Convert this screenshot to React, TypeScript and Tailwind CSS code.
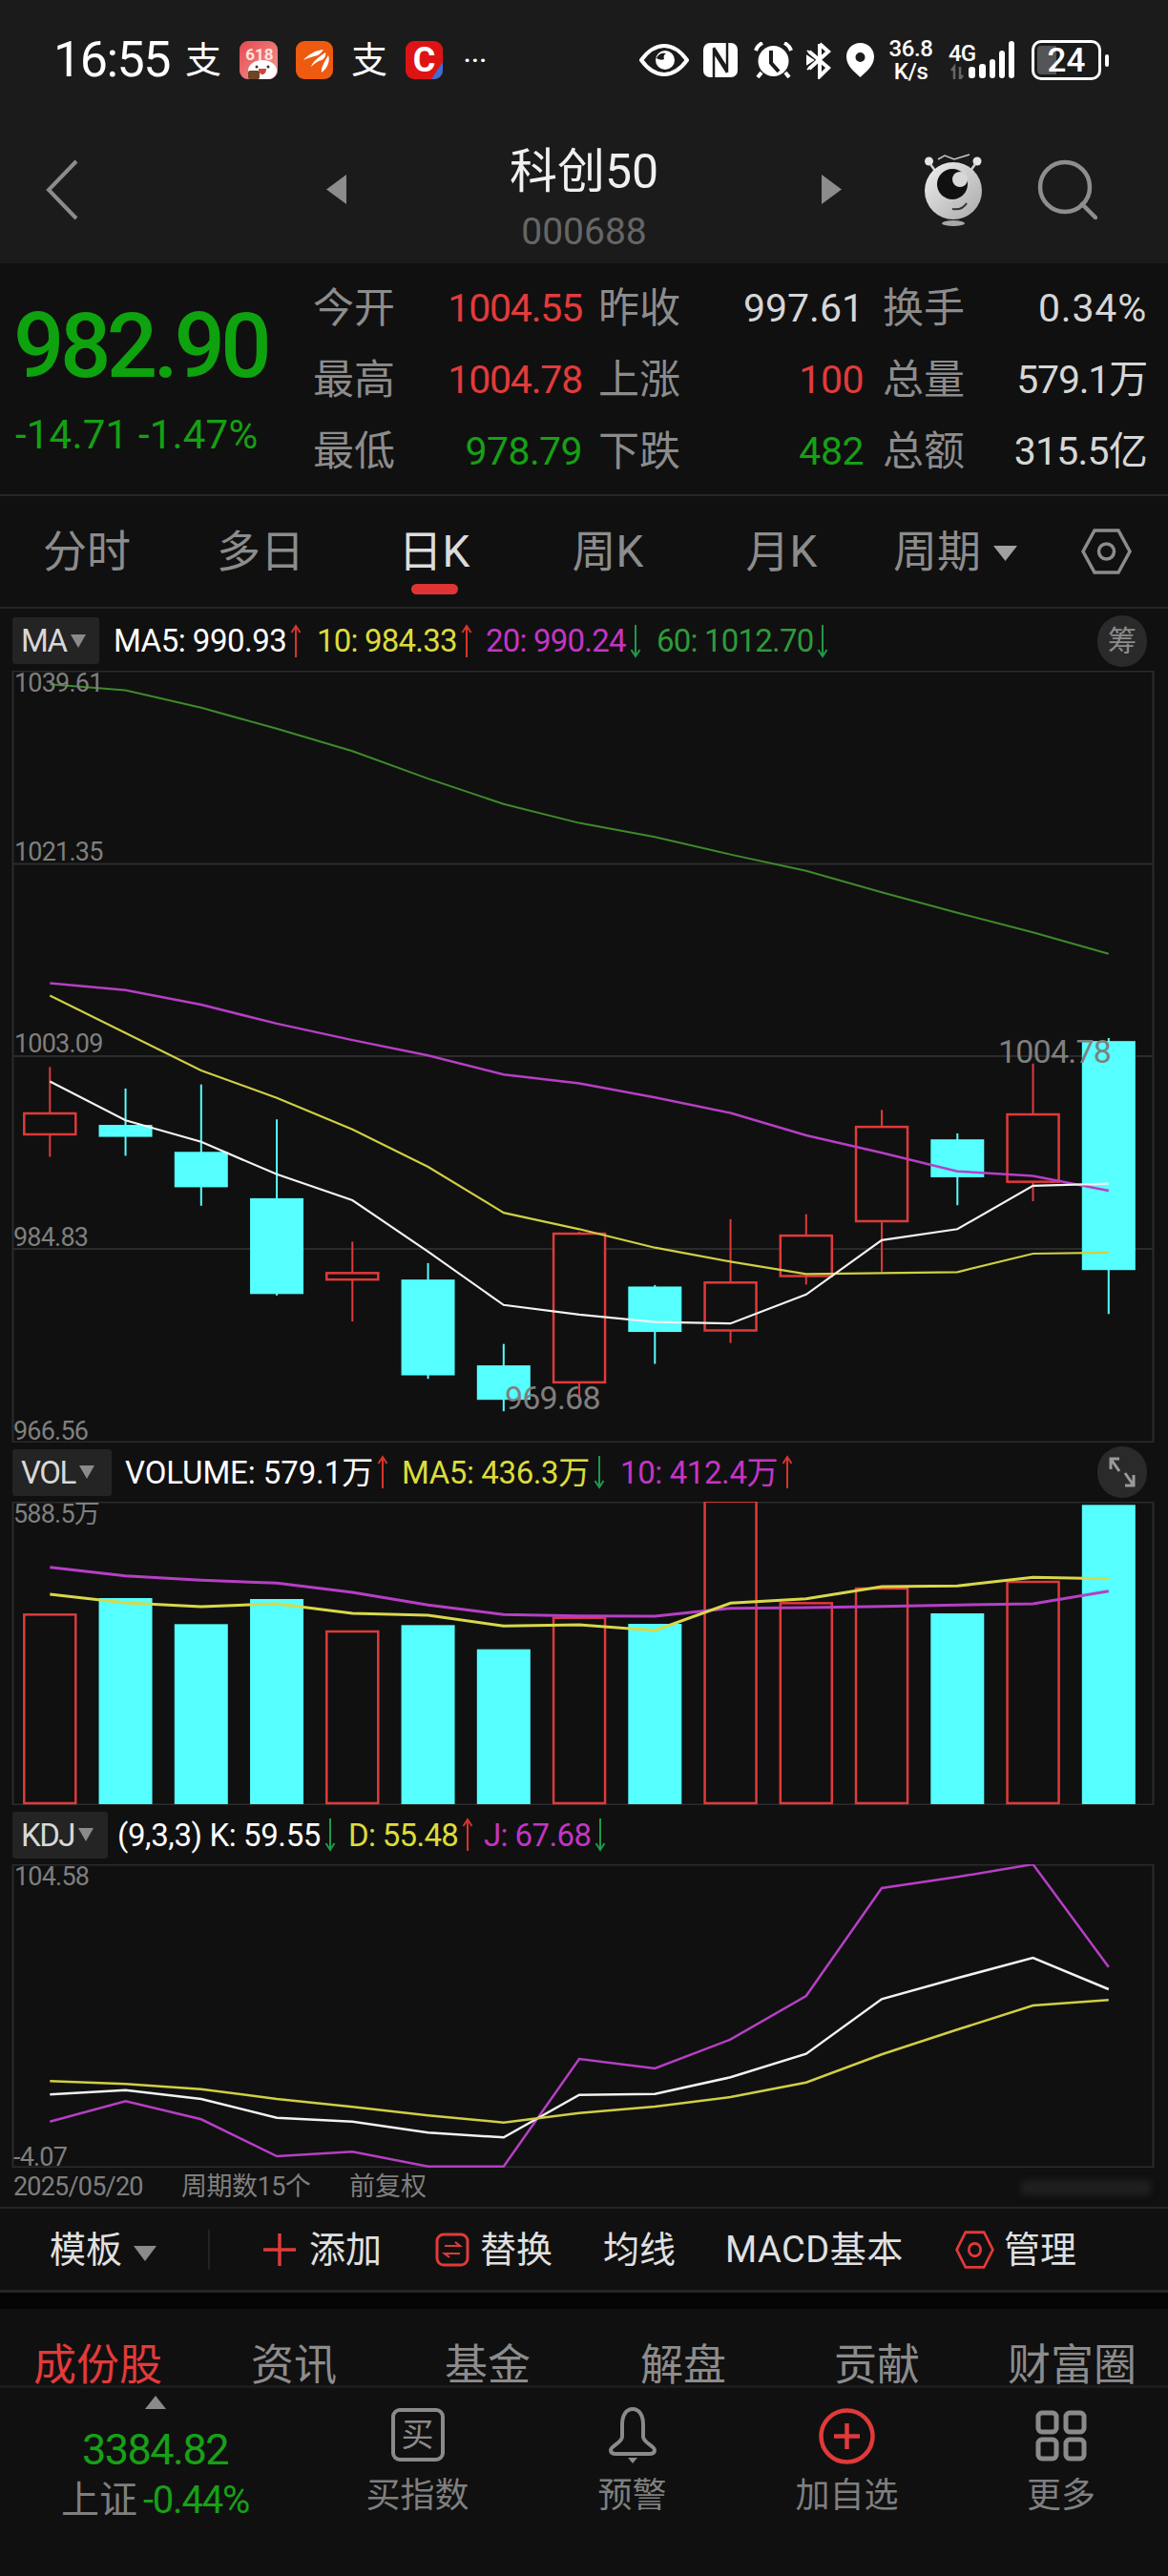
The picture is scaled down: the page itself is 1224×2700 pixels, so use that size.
import React from 'react';

const cx = (i: number) => 52.3 + 79.25 * i;
const mainY = (z: number) => 700 + (z * 820) / 1568;
const volY = (z: number) => 1500 + z / 3;
const kdjY = (z: number) => 1880 + z / 3;
const pts = (vals: number[], toY: (z: number) => number) =>
  vals.map((z, i) => `${cx(i).toFixed(1)},${toY(z).toFixed(1)}`).join(' ');

const RED = '#e03a3a';
const CYAN = '#55ffff';

// wick top, wick bottom, body top, body bottom, up?
const candles: [number, number, number, number, boolean][] = [
  [800, 980, 893, 935, true],
  [843, 978, 916, 940, false],
  [835, 1078, 970, 1041, false],
  [905, 1258, 1063, 1255, false],
  [1150, 1310, 1213, 1226, true],
  [1193, 1425, 1226, 1418, false],
  [1355, 1490, 1398, 1467, false],
  [1130, 1470, 1134, 1432, true],
  [1237, 1395, 1240, 1331, false],
  [1105, 1353, 1232, 1328, true],
  [1095, 1236, 1138, 1219, true],
  [886, 1210, 920, 1109, true],
  [933, 1077, 945, 1021, false],
  [793, 1069, 895, 1030, true],
  [742, 1295, 748, 1207, false],
];

const ma60 = [33, 45, 80, 122, 167, 222, 273, 311, 339, 374, 407, 450, 491, 530, 573];
const ma20 = [632, 646, 675, 713, 746, 777, 815, 833, 861, 892, 937, 972, 1009, 1018, 1048];
const ma10 = [657, 732, 807, 862, 925, 1000, 1092, 1125, 1162, 1190, 1215, 1213, 1211, 1174, 1172];
const ma5 = [829, 907, 950, 1015, 1067, 1170, 1277, 1296, 1311, 1314, 1256, 1147, 1125, 1038, 1034];

const bars: [number, boolean][] = [
  [577, true], [525, false], [607, false], [528, false], [630, true],
  [610, false], [686, false], [587, true], [606, false], [221, true],
  [541, true], [495, true], [573, false], [474, true], [232, false],
];
const vol10 = [428, 455, 469, 478, 507, 547, 577, 581, 582, 557, 555, 551, 547, 543, 503];
const vol5 = [513, 540, 552, 543, 573, 579, 613, 609, 627, 541, 527, 489, 487, 460, 464];

const kdjJ = [1031, 967, 1024, 1140, 1126, 1172, 1172, 834, 864, 773, 636, 297, 262, 222, 545];
const kdjK = [946, 932, 960, 1019, 1031, 1066, 1081, 947, 944, 892, 818, 646, 580, 516, 615];
const kdjD = [904, 913, 929, 960, 985, 1012, 1034, 1004, 984, 954, 908, 820, 742, 666, 649];

const Arrow = ({ up }: { up?: boolean }) => (
  <svg width="12" height="36" viewBox="0 0 12 36" className="ml-[4px] shrink-0" fill="none" stroke={up ? '#d8342c' : '#1f9a4a'} strokeWidth="2">
    {up ? <path d="M6 35V2M1.5 9 6 2l4.5 7" /> : <path d="M6 1v33M1.5 27 6 34l4.5-7" />}
  </svg>
);

const Caret = () => (
  <svg width="18" height="16" viewBox="0 0 18 16" className="shrink-0">
    <path d="M1 1h16L9 15z" fill="#8a8a8a" />
  </svg>
);

const Eye = () => (
  <svg width="52" height="36" viewBox="0 0 52 36" className="ml-[155px] shrink-0">
    <path d="M2 18C10 7 18 3 26 3s16 4 24 15c-8 11-16 15-24 15S10 29 2 18z" fill="none" stroke="#fff" strokeWidth="4" strokeLinejoin="round" />
    <circle cx="27" cy="18" r="10" fill="#fff" />
    <path d="M18 16c2-5 6-6 10-5-2 1-3 3-2 6-2 1-5 1-8-1z" fill="#1b1b1b" />
  </svg>
);

const Nfc = () => (
  <svg width="36" height="36" viewBox="0 0 36 36" className="ml-[15px] shrink-0">
    <rect width="36" height="36" rx="7" fill="#fff" />
    <path d="M11 36V9l14 22M25 0v27L11 5" stroke="#1b1b1b" strokeWidth="2.500" fill="none" />
  </svg>
);

const Alarm = () => (
  <svg width="41" height="38" viewBox="0 0 41 38" className="ml-[17px] shrink-0" fill="none">
    <circle cx="20.5" cy="20" r="16" fill="#fff" />
    <path d="M18 9v13l8 9" stroke="#1b1b1b" strokeWidth="4" />
    <path d="M2 9c1-3 3-6 7-8M39 9c-1-3-3-6-7-8M8 32l-4 5M33 32l4 5" stroke="#fff" strokeWidth="4" />
  </svg>
);

const Bluetooth = () => (
  <svg width="28" height="40" viewBox="0 0 28 40" className="ml-[14px] shrink-0" fill="none" stroke="#fff" strokeWidth="4">
    <path d="M14 3v34l9-9-20-17M14 3l9 8L3 29" />
    <path d="M1 16l6 4-6 4zM1 10l5 4M1 30l5-4" fill="#fff" strokeWidth="2" />
  </svg>
);

const Pin = () => (
  <svg width="31" height="38" viewBox="0 0 31 38" className="ml-[13px] shrink-0">
    <path fillRule="evenodd" d="M15.5 1C7 1 1 7.500 1 15.500 1 25 10 32 15.500 37 21 32 30 25 30 15.500 30 7.500 24 1 15.500 1zm0 10a5 5 0 1 1 0 10 5 5 0 0 1 0-10z" fill="#fff" />
  </svg>
);

const Signal = () => (
  <div className="relative ml-[14px] w-[69px] h-[40px] shrink-0">
    <svg width="69" height="40" viewBox="0 0 69 40" className="block">
      <path d="M6 40V27l-3 4M12 27v13l3-4" stroke="#666" strokeWidth="2.500" fill="none" />
      <rect x="21" y="27" width="7" height="12" rx="3" fill="#fff" />
      <rect x="32" y="24" width="7" height="15" rx="3" fill="#fff" />
      <rect x="43" y="19" width="6" height="20" rx="3" fill="#fff" />
      <rect x="53" y="10" width="6" height="29" rx="3" fill="#fff" />
      <rect x="63" y="0" width="6" height="39" rx="3" fill="#fff" />
    </svg>
    <span className="absolute left-0 top-[1px] text-[24px] leading-none font-medium tracking-[-0.800px]">4G</span>
  </div>
);

const Battery = () => (
  <div className="ml-[18px] flex items-center gap-[4px] shrink-0">
    <div className="relative w-[73px] h-[42px] rounded-[10px] border-[3px] border-white overflow-hidden flex items-center justify-center">
      <div className="absolute left-[3px] top-[3px] bottom-[3px] w-[20px] rounded-l-[4px] bg-[#555]" />
      <span className="relative text-[35px] leading-none font-medium text-white">24</span>
    </div>
    <div className="w-[4px] h-[13px] rounded-full bg-white" />
  </div>
);

const Icon618 = () => (
  <svg width="40" height="40" viewBox="0 0 40 40" className="ml-[17px] shrink-0">
    <defs>
      <linearGradient id="bg618" x1="0" y1="0" x2="1" y2="1">
        <stop offset="0" stopColor="#e5484f" />
        <stop offset="1" stopColor="#f29a94" />
      </linearGradient>
      <clipPath id="clip618">
        <rect width="40" height="40" rx="9" />
      </clipPath>
    </defs>
    <g clipPath="url(#clip618)">
      <rect width="40" height="40" fill="url(#bg618)" />
      <text x="21" y="20" textAnchor="middle" fontSize="17" fontWeight="700" fill="#ffe3dc" fontFamily="Roboto">618</text>
      <ellipse cx="24" cy="31" rx="15" ry="11" fill="#fff" />
      <circle cx="18" cy="27" r="1.500" fill="#333" />
      <circle cx="30" cy="27" r="1.500" fill="#333" />
      <path d="M20 29h8c0 4-2 6-4 6s-4-2-4-6z" fill="#d2453a" />
      <rect x="9" y="31" width="12" height="9" rx="2" fill="#6e4424" />
    </g>
  </svg>
);

const IconOrange = () => (
  <svg width="39" height="40" viewBox="0 0 39 40" className="ml-[19px] shrink-0">
    <rect width="39" height="40" rx="9" fill="#ee5a10" />
    <path d="M8 20c5-6 12-10 21-11-2 3-4 5-6 6-5 1-11 3-15 5zM16 27c2-6 8-10 15-15 1 3-1 7-4 8-4 1-8 4-11 7zM27 33c-1-5 3-11 7-18 2 5 0 13-7 18z" fill="#fff" />
  </svg>
);

const IconC = () => (
  <div className="ml-[18px] relative w-[39px] h-[40px] shrink-0 rounded-[9px] bg-[#de1414] overflow-hidden flex items-center justify-center">
    <span className="text-[36px] leading-none font-bold text-white">C</span>
    <svg width="14" height="18" viewBox="0 0 14 18" className="absolute right-0 bottom-0">
      <path d="M14 0v18H2z" fill="#3a6fd8" />
    </svg>
  </div>
);

const Mascot = () => (
  <svg width="61" height="77" viewBox="0 0 61 77" className="ml-[86px] shrink-0">
    <defs>
      <linearGradient id="mascotBody" x1="0" y1="0" x2="1" y2="1">
        <stop offset="0" stopColor="#f0f0f0" />
        <stop offset="1" stopColor="#a8a8a8" />
      </linearGradient>
    </defs>
    <path d="M15 7 22 3 32 7 48 2" stroke="#c8c8c8" strokeWidth="1.500" fill="none" />
    <circle cx="5.500" cy="9" r="4.500" fill="#e4e4e4" />
    <circle cx="56" cy="9" r="4.500" fill="#e4e4e4" />
    <path d="M7 12 12 19M54 12 49 19" stroke="#d0d0d0" strokeWidth="2.500" />
    <circle cx="31" cy="40" r="30" fill="url(#mascotBody)" />
    <circle cx="30" cy="33" r="16" fill="#101010" />
    <circle cx="38" cy="28" r="8" fill="#d8d8d8" />
    <path d="M30 59c6 1 12-1 15-6" stroke="#333" strokeWidth="2" fill="none" />
    <ellipse cx="31" cy="74" rx="12" ry="3" fill="#a8a8a8" />
  </svg>
);

const Search = () => (
  <svg width="63" height="63" viewBox="0 0 63 63" className="ml-[58px] shrink-0" fill="none" stroke="#8e8e8e" strokeWidth="4.500">
    <circle cx="29" cy="29" r="26" />
    <path d="M47 47 61 61" strokeLinecap="round" />
  </svg>
);

const HexIcon = ({ color, w, h, className }: { color: string; w: number; h: number; className?: string }) => (
  <svg width={w} height={h} viewBox="0 0 53 48" preserveAspectRatio="none" className={className} fill="none" stroke={color} strokeWidth="3.500">
    <path d="M14 2h25l12 22-12 22H14L2 24z" />
    <circle cx="26.500" cy="24" r="8" />
  </svg>
);

const Indicator = ({ className, children, up }: { className: string; children: React.ReactNode; up?: boolean }) => (
  <>
    <span className={`text-[33px] leading-none whitespace-nowrap shrink-0 ${className}`}>{children}</span>
    <Arrow up={up} />
  </>
);

const Tag = ({ label, className }: { label: string; className: string }) => (
  <div className={`h-[49px] ml-[13px] shrink-0 rounded-[3px] bg-[#242424] flex items-center pl-[9px] gap-[3px] ${className}`}>
    <span className="text-[33px] leading-none text-[#d8d8d8] tracking-[-1.500px]">{label}</span>
    <Caret />
  </div>
);

const RoundBtn = ({ children }: { children: React.ReactNode }) => (
  <div className="ml-auto mr-[22px] w-[52px] h-[54px] rounded-full bg-[#2a2a2a] flex items-center justify-center shrink-0">
    {children}
  </div>
);

const ChartLabel = ({ className, children }: { className: string; children: React.ReactNode }) => (
  <span className={`absolute leading-none whitespace-nowrap tracking-[-0.800px] text-[#7f7f7f] ${className}`}>{children}</span>
);

const quoteRows = [
  [
    ['今开', '1004.55', 'text-[#e23b3b] tracking-[-1.200px]'],
    ['昨收', '997.61', 'text-[#d6d6d6] tracking-[0px]'],
    ['换手', '0.34%', 'text-[#d6d6d6] tracking-[0.800px]'],
  ],
  [
    ['最高', '1004.78', 'text-[#e23b3b] tracking-[-1.200px]'],
    ['上涨', '100', 'text-[#e23b3b] tracking-[-0.500px]'],
    ['总量', '579.1万', 'text-[#d6d6d6] tracking-[-1.200px]'],
  ],
  [
    ['最低', '978.79', 'text-[#16a016] tracking-[-0.600px]'],
    ['下跌', '482', 'text-[#16a016] tracking-[-0.500px]'],
    ['总额', '315.5亿', 'text-[#d6d6d6] tracking-[-0.800px]'],
  ],
];

const tabs = ['分时', '多日', '日K', '周K', '月K'];
const subTabs = [
  ['成份股', 'w-[134px] ml-[35px] text-[#e23b3b]'],
  ['资讯', 'w-[90px] ml-[94px] text-[#8c8c8c]'],
  ['基金', 'w-[90px] ml-[113px] text-[#8c8c8c]'],
  ['解盘', 'w-[90px] ml-[115px] text-[#8c8c8c]'],
  ['贡献', 'w-[90px] ml-[113px] text-[#8c8c8c]'],
  ['财富圈', 'w-[134px] ml-[92px] text-[#8c8c8c]'],
];

export default function App() {
  return (
    <div className="w-[1224px] h-[2700px] overflow-hidden bg-[#101010] font-[Roboto,'Noto_Sans_CJK_SC',sans-serif] text-white">
      {/* status bar + title */}
      <header className="h-[276px] bg-[#1b1b1b]">
        <div className="h-[126px] flex items-center">
          <span className="ml-[56px] w-[122px] shrink-0 text-[52px] leading-none tracking-[-1.500px]">16:55</span>
          <span className="ml-[16px] w-[40px] shrink-0 text-[38px] leading-none">支</span>
          <Icon618 />
          <IconOrange />
          <span className="ml-[19px] w-[39px] shrink-0 text-[38px] leading-none">支</span>
          <IconC />
          <span className="ml-[22px] w-[29px] shrink-0 text-[24px] leading-none font-bold tracking-[1px]">···</span>
          <Eye />
          <Nfc />
          <Alarm />
          <Bluetooth />
          <Pin />
          <div className="ml-[12px] w-[51px] shrink-0 flex flex-col items-center font-medium text-[24px] leading-[24px] tracking-[-0.400px]">
            <span>36.8</span>
            <span>K/s</span>
          </div>
          <Signal />
          <Battery />
        </div>
        <div className="h-[150px] pb-[5px] flex items-center">
          <svg width="34" height="64" viewBox="0 0 34 64" className="ml-[48px] shrink-0" fill="none" stroke="#8c8c8c" strokeWidth="4">
            <path d="M32 2 3 32l29 30" />
          </svg>
          <svg width="21" height="31" viewBox="0 0 21 31" className="ml-[260px] shrink-0">
            <path d="M21 0v31L0 15.500z" fill="#8c8c8c" />
          </svg>
          <div className="w-[498px] shrink-0 self-start flex flex-col items-center pt-[26px]">
            <span className="text-[50px] leading-[56px] text-[#f0f0f0]">科创50</span>
            <span className="mt-[16px] text-[39px] leading-none text-[#666]">000688</span>
          </div>
          <svg width="21" height="31" viewBox="0 0 21 31" className="shrink-0">
            <path d="M0 0v31l21-15.500z" fill="#8c8c8c" />
          </svg>
          <Mascot />
          <Search />
        </div>
      </header>

      {/* quote */}
      <section className="h-[244px] flex border-b-[2px] border-[#262626]">
        <div className="w-[328px] shrink-0 pl-[14px] pt-[40px]">
          <div className="text-[94px] leading-none font-medium text-[#0ea20e] tracking-[-4.500px]">982.90</div>
          <div className="mt-[25px] pl-[2px] text-[42px] leading-none text-[#14a014] tracking-[0.200px] whitespace-nowrap">-14.71 -1.47%</div>
        </div>
        <div className="pt-[10px] grid grid-cols-[86px_196px_102px_193px_106px_191px] auto-rows-[75px] items-center">
          {quoteRows.map((row) =>
            row.map(([label, value, color], i) => (
              <React.Fragment key={label}>
                <span className={`text-[43px] leading-none text-[#8c8c8c] whitespace-nowrap ${i === 1 ? 'ml-[17px]' : ''} ${i === 2 ? 'ml-[20px]' : ''}`}>{label}</span>
                <span className={`text-[41px] leading-none text-right whitespace-nowrap ${color}`}>{value}</span>
              </React.Fragment>
            ))
          )}
        </div>
      </section>

      {/* period tabs */}
      <nav className="h-[118px] flex border-b-[2px] border-[#262626]">
        {tabs.map((t, i) => (
          <div key={t} className="w-[182px] shrink-0 flex flex-col items-center pt-[35px]">
            <span className={`h-[46px] text-[46px] leading-[46px] ${i === 2 ? 'text-[#dcdcdc]' : 'text-[#8c8c8c]'}`}>{t}</span>
            <div className={`mt-[11px] w-[49px] h-[11px] rounded-full ${i === 2 ? 'bg-[#e03434]' : ''}`} />
          </div>
        ))}
        <div className="w-[182px] shrink-0 flex justify-center gap-[13px] pt-[35px]">
          <span className="h-[46px] text-[46px] leading-[46px] text-[#8c8c8c]">周期</span>
          <svg width="25" height="16" viewBox="0 0 25 16" className="mt-[17px]">
            <path d="M0 0h25L12.500 16z" fill="#a0a0a0" />
          </svg>
        </div>
        <HexIcon color="#8c8c8c" w={53} h={48} className="ml-[41px] mt-[34px] shrink-0" />
      </nav>

      {/* MA header */}
      <div className="h-[65px] pt-[2px] flex items-center">
        <Tag label="MA" className="w-[91px]" />
        <div className="ml-[15px] flex items-center w-[197px] shrink-0">
          <Indicator className="text-white tracking-[-0.500px]" up>MA5: 990.93</Indicator>
        </div>
        <div className="ml-[16px] flex items-center w-[163px] shrink-0">
          <Indicator className="text-[#dcdc3c] tracking-[-0.800px]" up>10: 984.33</Indicator>
        </div>
        <div className="ml-[14px] flex items-center w-[165px] shrink-0">
          <Indicator className="text-[#c435c4] tracking-[-0.800px]">20: 990.24</Indicator>
        </div>
        <div className="ml-[14px] flex items-center w-[180px] shrink-0">
          <Indicator className="text-[#2f9a3a] tracking-[-0.800px]">60: 1012.70</Indicator>
        </div>
        <RoundBtn>
          <span className="text-[30px] leading-none text-[#8c8c8c]">筹</span>
        </RoundBtn>
      </div>

      {/* candlestick panel */}
      <div className="relative h-[809px]">
        <svg width="1224" height="809" viewBox="0 703 1224 809" className="block" fill="none">
          <rect x="13.500" y="703.500" width="1195" height="808" stroke="#2b2b2b" strokeWidth="2" />
          <path d="M13 905.500h1196M13 1107h1196M13 1309h1196" stroke="#2b2b2b" strokeWidth="2" />
          {candles.map(([wt, wb, bt, bb, up], i) => {
            const c = up ? RED : CYAN;
            const x = cx(i);
            return (
              <g key={i}>
                <path d={`M${x} ${mainY(wt)}V${mainY(wb)}`} stroke={c} strokeWidth="2" />
                {up ? (
                  <rect x={x - 27} y={mainY(bt)} width="54" height={mainY(bb) - mainY(bt)} fill="#101010" stroke={c} strokeWidth="2.500" />
                ) : (
                  <rect x={x - 28} y={mainY(bt)} width="56" height={mainY(bb) - mainY(bt)} fill={c} />
                )}
              </g>
            );
          })}
          <polyline points={pts(ma60, mainY)} stroke="#3e8a2c" strokeWidth="2" />
          <polyline points={pts(ma20, mainY)} stroke="#b63fc4" strokeWidth="2.500" />
          <polyline points={pts(ma10, mainY)} stroke="#cfcf45" strokeWidth="2.200" />
          <polyline points={pts(ma5, mainY)} stroke="#f2f2f2" strokeWidth="2.200" />
        </svg>
        <ChartLabel className="left-[15px] top-[0px] text-[27px]">1039.61</ChartLabel>
        <ChartLabel className="left-[15px] top-[177px] text-[27px]">1021.35</ChartLabel>
        <ChartLabel className="left-[15px] top-[378px] text-[27px]">1003.09</ChartLabel>
        <ChartLabel className="left-[14px] top-[581px] text-[27px]">984.83</ChartLabel>
        <ChartLabel className="left-[14px] top-[784px] text-[27px]">966.56</ChartLabel>
        <ChartLabel className="left-[1046px] top-[382px] text-[34px]">1004.78</ChartLabel>
        <ChartLabel className="left-[529px] top-[745px] text-[34px]">969.68</ChartLabel>
      </div>

      {/* volume header */}
      <div className="h-[62px] flex items-center">
        <Tag label="VOL" className="w-[104px]" />
        <div className="ml-[14px] flex items-center w-[276px] shrink-0">
          <Indicator className="text-white tracking-[-0.100px]" up>VOLUME: 579.1万</Indicator>
        </div>
        <div className="ml-[14px] flex items-center w-[213px] shrink-0">
          <Indicator className="text-[#dcdc3c] tracking-[-0.400px]">MA5: 436.3万</Indicator>
        </div>
        <div className="ml-[16px] flex items-center w-[180px] shrink-0">
          <Indicator className="text-[#c435c4] tracking-[-0.400px]" up>10: 412.4万</Indicator>
        </div>
        <RoundBtn>
          <svg width="30" height="34" viewBox="0 0 30 34" fill="none" stroke="#9a9a9a" strokeWidth="3">
            <path d="M3 14V3h9M3 3l9 13M27 20v11h-9M27 31 18 18" />
          </svg>
        </RoundBtn>
      </div>

      {/* volume panel */}
      <div className="relative h-[318px]">
        <svg width="1224" height="318" viewBox="0 1574 1224 318" className="block" fill="none">
          <rect x="13.500" y="1574.500" width="1195" height="317" stroke="#2b2b2b" strokeWidth="2" />
          {bars.map(([top, up], i) => {
            const x = cx(i);
            const y = volY(top);
            return up ? (
              <rect key={i} x={x - 27} y={y} width="54" height={1890 - y} fill="#101010" stroke={RED} strokeWidth="2.500" />
            ) : (
              <rect key={i} x={x - 28} y={y} width="56" height={1891 - y} fill={CYAN} />
            );
          })}
          <polyline points={pts(vol10, volY)} stroke="#b63fc4" strokeWidth="3" />
          <polyline points={pts(vol5, volY)} stroke="#d8d84a" strokeWidth="3" />
        </svg>
        <ChartLabel className="left-[14px] top-[0px] text-[27px]">588.5万</ChartLabel>
      </div>

      {/* KDJ header */}
      <div className="h-[62px] flex items-center">
        <Tag label="KDJ" className="w-[100px]" />
        <div className="ml-[10px] flex items-center w-[224px] shrink-0">
          <Indicator className="text-white tracking-[-0.400px]">(9,3,3) K: 59.55</Indicator>
        </div>
        <div className="ml-[18px] flex items-center w-[124px] shrink-0">
          <Indicator className="text-[#dcdc3c] tracking-[-0.700px]" up>D: 55.48</Indicator>
        </div>
        <div className="ml-[18px] flex items-center w-[124px] shrink-0">
          <Indicator className="text-[#c435c4] tracking-[-0.600px]">J: 67.68</Indicator>
        </div>
      </div>

      {/* KDJ panel */}
      <div className="relative h-[318px]">
        <svg width="1224" height="318" viewBox="0 1954 1224 318" className="block" fill="none">
          <rect x="13.500" y="1954.500" width="1195" height="317" stroke="#2b2b2b" strokeWidth="2" />
          <polyline points={pts(kdjJ, kdjY)} stroke="#b63fc4" strokeWidth="2.500" />
          <polyline points={pts(kdjK, kdjY)} stroke="#f2f2f2" strokeWidth="2.500" />
          <polyline points={pts(kdjD, kdjY)} stroke="#cfcf45" strokeWidth="2.500" />
        </svg>
        <ChartLabel className="left-[15px] top-[0px] text-[27px]">104.58</ChartLabel>
        <ChartLabel className="left-[14px] top-[294px] text-[27px]">-4.07</ChartLabel>
      </div>

      {/* date line */}
      <div className="h-[43px] flex items-center border-b-[2px] border-[#262626] text-[27px] leading-none text-[#7f7f7f]">
        <span className="ml-[14px] w-[137px] shrink-0 tracking-[-0.800px]">2025/05/20</span>
        <span className="ml-[39px] w-[138px] shrink-0 tracking-[-0.500px] whitespace-nowrap">周期数15个</span>
        <span className="ml-[38px] w-[81px] shrink-0">前复权</span>
        <div className="ml-auto mr-[18px] w-[136px] h-[16px] rounded-sm bg-[#1f1f1f] blur-[3px]" />
      </div>

      {/* toolbar */}
      <div className="h-[88px] flex items-center border-b-[3px] border-[#262626] text-[38px] leading-none text-[#e0e0e0]">
        <span className="ml-[52px] w-[75px] shrink-0 whitespace-nowrap">模板</span>
        <svg width="24" height="16" viewBox="0 0 24 16" className="ml-[13px] mt-[8px] shrink-0">
          <path d="M0 0h24L12 16z" fill="#8a8a8a" />
        </svg>
        <div className="ml-[54px] w-[2px] h-[42px] bg-[#222] shrink-0" />
        <svg width="34" height="34" viewBox="0 0 34 34" className="ml-[56px] shrink-0" stroke={RED} strokeWidth="3.500">
          <path d="M17 0v34M0 17h34" />
        </svg>
        <span className="ml-[14px] w-[74px] shrink-0 whitespace-nowrap">添加</span>
        <svg width="36" height="36" viewBox="0 0 36 36" className="ml-[58px] shrink-0" fill="none" stroke={RED} strokeWidth="3">
          <rect x="2" y="2" width="32" height="32" rx="7" />
          <path d="M10 14h16l-5-4M26 22H10l5 4" strokeWidth="2.200" />
        </svg>
        <span className="ml-[11px] w-[76px] shrink-0 whitespace-nowrap">替换</span>
        <span className="ml-[53px] w-[74px] shrink-0 whitespace-nowrap">均线</span>
        <span className="ml-[54px] w-[187px] shrink-0 whitespace-nowrap tracking-[0.500px]">MACD基本</span>
        <HexIcon color={RED} w={41} h={40} className="ml-[54px] shrink-0" />
        <span className="ml-[10px] w-[76px] shrink-0 whitespace-nowrap">管理</span>
      </div>

      <div className="h-[17px] bg-[#050505]" />

      {/* sub tabs */}
      <div className="h-[83px] flex items-end border-b-[3px] border-[#1c1c1c]">
        {subTabs.map(([label, cls]) => (
          <span key={label} className={`shrink-0 text-[45px] leading-[40px] whitespace-nowrap ${cls}`}>{label}</span>
        ))}
      </div>

      {/* bottom nav */}
      <div className="grid grid-cols-[325px_225px_225px_225px_224px]">
        <div className="flex flex-col items-center pt-[8px]">
          <svg width="22" height="14" viewBox="0 0 22 14">
            <path d="M0 14h22L11 0z" fill="#8a8a8a" />
          </svg>
          <span className="mt-[20px] text-[45px] leading-none text-[#17a017] tracking-[-1.500px]">3384.82</span>
          <div className="mt-[11px] flex items-center gap-[6px] text-[40px] leading-none whitespace-nowrap">
            <span className="text-[#7f7f7f]">上证</span>
            <span className="text-[#17a017] tracking-[-1.200px]">-0.44%</span>
          </div>
        </div>
        <div className="flex flex-col items-center pt-[21px]">
          <div className="w-[56px] h-[56px] rounded-[9px] border-[4px] border-[#8a8a8a] flex items-center justify-center text-[34px] leading-none text-[#8a8a8a]">买</div>
          <span className="mt-[18px] text-[36px] leading-none text-[#7f7f7f]">买指数</span>
        </div>
        <div className="flex flex-col items-center pt-[20px]">
          <svg width="52" height="60" viewBox="0 0 52 60" fill="none" stroke="#8a8a8a" strokeWidth="4">
            <path d="M26 2c-7 0-11 7-11 16v13c0 6-12 10-12 14 0 3 3 4 6 4h34c3 0 6-1 6-4 0-4-12-8-12-14V18c0-9-4-16-11-16z" />
            <path d="M21 53h10l-5 6z" fill="#8a8a8a" stroke="none" />
          </svg>
          <span className="mt-[15px] text-[36px] leading-none text-[#7f7f7f]">预警</span>
        </div>
        <div className="flex flex-col items-center pt-[21px]">
          <svg width="59" height="59" viewBox="0 0 59 59" fill="none" stroke={RED} strokeWidth="4.500">
            <circle cx="29.500" cy="29.500" r="27" />
            <path d="M29.500 16v27M16 29.500h27" />
          </svg>
          <span className="mt-[15px] text-[36px] leading-none text-[#7f7f7f]">加自选</span>
        </div>
        <div className="flex flex-col items-center pt-[23px]">
          <svg width="54" height="54" viewBox="0 0 54 54" fill="none" stroke="#8a8a8a" strokeWidth="5">
            <rect x="3" y="3" width="19" height="20" rx="4" />
            <rect x="32" y="3" width="19" height="20" rx="4" />
            <rect x="3" y="31" width="19" height="20" rx="4" />
            <rect x="32" y="31" width="19" height="20" rx="4" />
          </svg>
          <span className="mt-[18px] text-[36px] leading-none text-[#7f7f7f]">更多</span>
        </div>
      </div>
    </div>
  );
}
